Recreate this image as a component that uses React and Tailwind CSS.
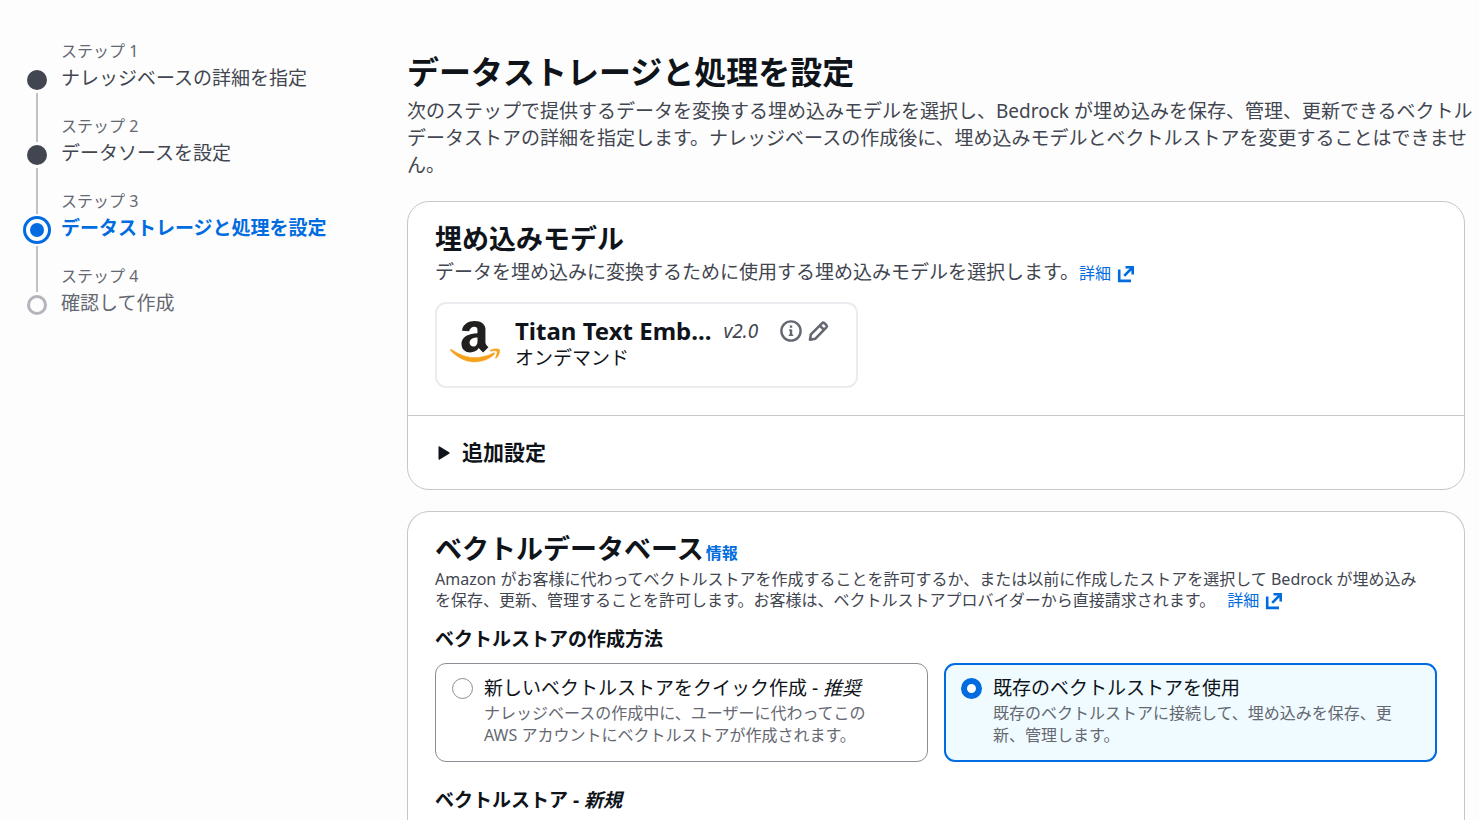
import { useState } from "react";

const steps = [
  { n: 1, title: "ナレッジベースの詳細を指定", state: "done" },
  { n: 2, title: "データソースを設定", state: "done" },
  { n: 3, title: "データストレージと処理を設定", state: "current" },
  { n: 4, title: "確認して作成", state: "todo" },
];

const titleClass = {
  done: "text-[#424650]",
  current: "font-bold text-[#006ce0]",
  todo: "text-[#656871]",
};

function Marker({ state }) {
  if (state === "current") {
    return (
      <span className="my-[2px] flex h-7 w-7 shrink-0 items-center justify-center rounded-full border-[3px] border-[#006ce0]">
        <span className="h-[14px] w-[14px] rounded-full bg-[#006ce0]" />
      </span>
    );
  }
  if (state === "done") {
    return <span className="my-[3px] h-5 w-5 shrink-0 rounded-full bg-[#424650]" />;
  }
  return <span className="my-[3px] h-5 w-5 shrink-0 rounded-full border-[3px] border-[#b4b4bb]" />;
}

function Step({ step, first, last }) {
  return (
    <li className="flex h-[75px] gap-[10px]" aria-current={step.state === "current" ? "step" : undefined}>
      <span className="flex w-7 shrink-0 flex-col items-center">
        <span
          className={
            "w-[2px] shrink-0 " +
            (step.state === "current" ? "h-6 " : "h-[27px] ") +
            (first ? "bg-transparent" : "bg-[#c0c0c7]")
          }
        />
        <Marker state={step.state} />
        <span className={"w-[2px] flex-1 " + (last ? "bg-transparent" : "bg-[#c0c0c7]")} />
      </span>
      <a href="#" className="flex flex-col whitespace-nowrap">
        <span className="text-[16px] leading-[22px] text-[#656871]">ステップ {step.n}</span>
        <span className={"mt-[3px] text-[19px] leading-[27px] " + titleClass[step.state]}>{step.title}</span>
      </a>
    </li>
  );
}

function ExternalIcon() {
  return (
    <svg viewBox="0 0 18 18" className="ml-[6px] inline-block h-[18px] w-[18px] align-[-4px]" fill="none" stroke="currentColor" strokeWidth="2.6" aria-hidden="true">
      <path d="M2.2 4.5v11.4H14" />
      <path d="M8.5 2.3h7.2v7.2M7.2 10.8l8.3-8.3" />
    </svg>
  );
}

function AmazonLogo() {
  return (
    <svg viewBox="0 0 50 44" className="mt-[3px] h-11 w-[50px] shrink-0" aria-label="Amazon" role="img">
      <g transform="translate(3.2 -2) scale(.0945 .093)">
        <path
          fill="#221f1f"
          d="M257.2 162.7c-48.7 1.8-169.5 15.5-169.5 117.5 0 109.5 138.3 114 183.5 43.2 6.5 10.2 35.4 37.5 45.3 46.8l56.8-56S341 288.9 341 261.4V114.3C341 89 316.5 32 228.7 32 140.7 32 94 87 94 136.3l73.5 6.8c16.3-49.5 54.2-49.5 54.2-49.5 40.7-.1 35.5 29.8 35.5 69.1zm0 86.8c0 80-84.2 68-84.2 17.2 0-47.2 50.5-56.7 84.2-57.8v40.6z"
        />
      </g>
      <g transform="translate(-.4 -12.6) scale(.1135)">
        <path
          fill="#f6a11c"
          stroke="#f6a11c"
          strokeWidth="5"
          d="M393.2 413c-7.7 10-70 67-174.5 67S34.2 408.5 9.7 379c-6.8-7.7 1-11.3 5.5-8.3C88.5 415.2 203 488.5 387.7 401c7.5-3.7 13.3 2 5.5 12zm39.8 2.2c-6.5 15.8-16 26.8-21.2 31-5.5 4.5-9.5 2.7-6.5-3.8s19.3-46.5 12.7-55c-6.5-8.3-37-4.3-48-3.2-10.8 1-13 2-14-.3-2.3-5.7 21.7-15.5 37.5-17.5 15.7-1.8 41-.8 46 5.7 3.7 5.1 0 27.1-6.5 43.1z"
        />
      </g>
    </svg>
  );
}

function Tile({ id, checked, onSelect, title, children }) {
  return (
    <label
      htmlFor={id}
      className={
        "flex min-h-[99px] items-start gap-[11px] rounded-[11px] " +
        (checked ? "border-2 border-[#006ce0] bg-[#f0fbff] px-[15px] py-[10px]" : "border border-[#8c8c94] px-4 py-[11px]")
      }
    >
      <input
        id={id}
        type="radio"
        name="creation"
        checked={checked}
        onChange={onSelect}
        className={
          "mt-[3px] h-[21px] w-[21px] shrink-0 appearance-none rounded-full bg-white " +
          (checked ? "border-[6px] border-[#006ce0]" : "border border-[#8c8c94]")
        }
      />
      <span className="flex flex-col pr-5">
        <span className="text-[19px] leading-[27px] text-[#0f141a]">{title}</span>
        <span className="text-[16px] leading-[22px] text-[#656871]">{children}</span>
      </span>
    </label>
  );
}

export default function App() {
  const [mode, setMode] = useState("existing");
  return (
    <div className="flex min-h-screen bg-[#fdfdfd] pl-[23px] pr-[14px] font-['Noto_Sans','Noto_Sans_CJK_JP',sans-serif] text-[#0f141a]">
      <nav aria-label="ステップ" className="w-[384px] shrink-0 pt-10">
        <ol>
          {steps.map((s, i) => (
            <Step key={s.n} step={s} first={i === 0} last={i === steps.length - 1} />
          ))}
        </ol>
      </nav>

      <main className="flex min-w-0 flex-1 flex-col pt-[52px]">
        <h1 className="text-[32px] font-bold leading-10">データストレージと処理を設定</h1>
        <p className="mt-[6px] whitespace-nowrap text-[19px] leading-[27px] text-[#424650]">
          次のステップで提供するデータを変換する埋め込みモデルを選択し、Bedrock が埋め込みを保存、管理、更新できるベクトル
          <br />
          データストアの詳細を指定します。ナレッジベースの作成後に、埋め込みモデルとベクトルストアを変更することはできませ
          <br />
          ん。
        </p>

        <section className="mt-[22px] rounded-[22px] border border-[#c6c6cd] bg-white">
          <div className="px-[27px] pb-[27px] pt-[21px]">
            <h2 className="text-[27px] font-bold leading-8">埋め込みモデル</h2>
            <p className="mt-1 text-[19px] leading-[27px] text-[#424650]">
              データを埋め込みに変換するために使用する埋め込みモデルを選択します。
              <a href="#" className="text-[16px] leading-none text-[#006ce0]">
                詳細
                <ExternalIcon />
              </a>
            </p>
            <div className="mt-4 flex h-[86px] w-[423px] items-start rounded-[11px] border-2 border-[#ebebf0] pl-[13px] pt-[13px]">
              <AmazonLogo />
              <div className="ml-[15px]">
                <div className="flex items-center">
                  <strong className="text-[24px] leading-7">Titan Text Emb...</strong>
                  <em className="ml-3 text-[19px] leading-7 text-[#424650]">v2.0</em>
                  <button type="button" aria-label="情報" className="ml-[22px] text-[#656871]">
                    <svg viewBox="0 0 22 22" className="h-[22px] w-[22px]" fill="none" stroke="currentColor" strokeWidth="2.4">
                      <circle cx="11" cy="11" r="9.6" />
                      <path d="M11 5.4v2.4M11 9.4v6.4" strokeWidth="2.4" />
                      <path d="M9 10.1h2M8.8 15.3h4.4" strokeWidth="1.4" />
                    </svg>
                  </button>
                  <button type="button" aria-label="編集" className="ml-[6px] text-[#656871]">
                    <svg viewBox="0 0 22 22" className="h-[22px] w-[22px]" fill="none" stroke="currentColor" strokeWidth="2.6" strokeLinejoin="round">
                      <path d="M2 19.8l.9-5.4L14.2 3.2q1.1-1 2.2 0l2 2q1 1.1 0 2.2L7.2 18.8z" />
                      <path d="M11.8 5.6l4.3 4.3" />
                    </svg>
                  </button>
                </div>
                <p className="text-[19px] leading-[27px]">オンデマンド</p>
              </div>
            </div>
          </div>
          <button type="button" className="flex h-[74px] w-full items-center gap-3 border-t border-[#c6c6cd] px-[30px] text-[21px] font-bold leading-[27px]">
            <svg viewBox="0 0 12 14" className="h-[14px] w-3" fill="currentColor" aria-hidden="true">
              <path d="M.5 1.2q0-1.4 1.2-.6l9.4 5.6q1.2.8 0 1.6l-9.4 5.6q-1.2.8-1.2-.6z" />
            </svg>
            追加設定
          </button>
        </section>

        <section className="mt-[21px] flex-1 rounded-t-[22px] border border-b-0 border-[#c6c6cd] bg-white px-[27px] pt-[21px]">
          <h2 className="text-[27px] font-bold leading-8">
            ベクトルデータベース
            <a href="#" className="ml-[2px] text-[16px] leading-none text-[#006ce0]">情報</a>
          </h2>
          <p className="mt-1 text-[16px] leading-[21px] text-[#424650]">
            Amazon がお客様に代わってベクトルストアを作成することを許可するか、または以前に作成したストアを選択して Bedrock が埋め込み
            <br />
            を保存、更新、管理することを許可します。お客様は、ベクトルストアプロバイダーから直接請求されます。
            <a href="#" className="ml-3 leading-none text-[#006ce0]">
              詳細
              <ExternalIcon />
            </a>
          </p>
          <fieldset className="mt-[15px]">
            <legend className="text-[19px] font-bold leading-[27px]">ベクトルストアの作成方法</legend>
            <div className="mt-[10px] grid grid-cols-2 gap-4">
              <Tile
                id="quick"
                checked={mode === "quick"}
                onSelect={() => setMode("quick")}
                title={<>新しいベクトルストアをクイック作成 - <em>推奨</em></>}
              >
                ナレッジベースの作成中に、ユーザーに代わってこの AWS アカウントにベクトルストアが作成されます。
              </Tile>
              <Tile
                id="existing"
                checked={mode === "existing"}
                onSelect={() => setMode("existing")}
                title="既存のベクトルストアを使用"
              >
                既存のベクトルストアに接続して、埋め込みを保存、更新、管理します。
              </Tile>
            </div>
          </fieldset>
          <h3 className="mt-[25px] text-[19px] font-bold leading-[27px]">
            ベクトルストア - <em>新規</em>
          </h3>
        </section>
      </main>
    </div>
  );
}
